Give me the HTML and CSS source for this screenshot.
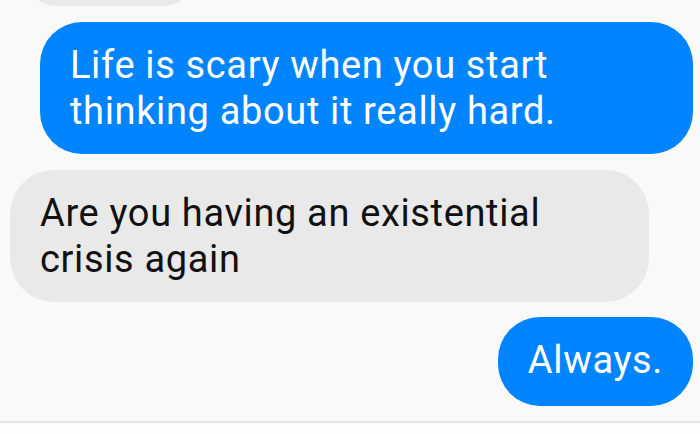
FILE: index.html
```html
<!DOCTYPE html>
<html lang="en">
  <head>
    <meta charset="UTF-8" />
    <meta name="viewport" content="width=device-width, initial-scale=1.0" />
    <title>Chat</title>
    <link rel="stylesheet" href="styles.css">
  </head>
  <body>
    <div class="chat">
      <div class="bubble theirs previous"></div>
      <div class="bubble mine first">Life is scary when you start thinking about it really hard.</div>
      <div class="bubble theirs second">Are you having an existential crisis again</div>
      <div class="bubble mine short">Always.</div>
    </div>
    <div class="composer"></div>
  </body>
</html>
```

FILE: styles.css
```css
body {
  margin: 0;
  background-color: #f9f9f9;
  font-family: Roboto, "Noto Sans", Arial, sans-serif;
  overflow: hidden;
}
.chat {
  display: flex;
  flex-direction: column;
  gap: 16px;
  height: 421px;
}
.bubble {
  box-sizing: border-box;
  padding: 20px 30px;
  font-size: 38px;
  line-height: 46px;
  letter-spacing: 0.65px;
}
.mine {
  align-self: flex-end;
  margin-right: 7px;
  background-color: #0084ff;
  color: white;
  border-radius: 42px;
}
.theirs {
  align-self: flex-start;
  margin-left: 10px;
  background-color: #e9e9e9;
  color: #111;
  border-radius: 44px;
}
.previous {
  margin-top: -54px;
  margin-left: 26px;
  width: 168px;
  height: 60px;
  border-radius: 30px;
}
.first {
  width: 653px;
}
.second {
  width: 639px;
}
.short {
  padding-bottom: 23px;
  margin-top: -1px;
}
.composer {
  border-top: 2px solid #e6e6e6;
  background-color: #fefefe;
  height: 20px;
}
```
